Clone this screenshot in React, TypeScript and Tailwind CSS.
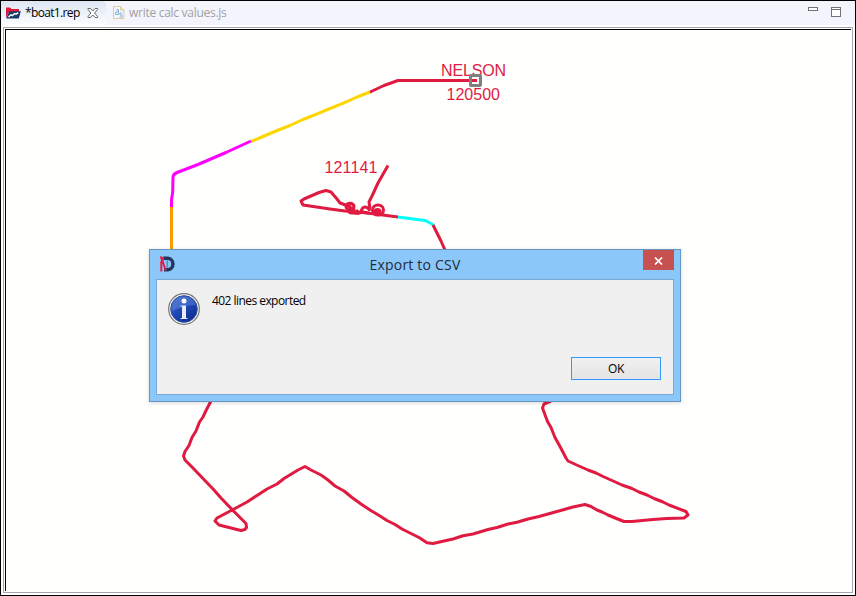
import React from "react";

const RED = "#e01b41";

function ReportIcon() {
  return (
    <svg width="16" height="14" viewBox="0 0 16 14" className="shrink-0">
      <path d="M1 1.5h4l1.5 1.5H14v3H4L1 12z" fill="#e0183c" />
      <path d="M4.200 5.300H15.800L13.800 12.500H1.200z" fill="#1c3a68" />
      <path d="M3.500 11l2.500-2.200 1.500 .8 2-2 1.500 .6 2.200-1.500" fill="none" stroke="#fff" strokeWidth="1.400" />
    </svg>
  );
}

function ScriptIcon() {
  return (
    <svg width="12" height="14" viewBox="0 0 12 14" className="shrink-0">
      <path d="M.5 .5H7.500L10.800 3.800V12.500H.5z" fill="#f5f8fc" stroke="#dccb9c" />
      <path d="M7.500 .5V4H10.800" fill="#f3e5be" stroke="#dccb9c" />
      <path d="M4 3.500H5.500V8.500H2.500V6.500H4zM9.300 7H7V9H9V11H6.500" fill="none" stroke="#8db3da" />
    </svg>
  );
}

function CloseTabIcon() {
  return (
    <svg width="12" height="12" viewBox="0 0 12 12" className="shrink-0">
      <path d="M1 1.500H3.500L5.800 4L8.100 1.500H10.600V2.500L7.600 6L10.600 9.500V10.500H8.100L5.800 8L3.500 10.500H1V9.500L4 6L1 2.500z" fill="#fff" stroke="#65656a" strokeWidth="1" />
    </svg>
  );
}

function TabBar() {
  return (
    <header className="flex h-6 shrink-0 bg-[#f4f5fc] text-[12px] leading-[24px]">
      <div className="flex w-[105px] items-center rounded-tr bg-gradient-to-b from-[#dce6f2] to-[#fcfdff] pl-1">
        <ReportIcon />
        <span className="ml-[4px] w-[56px] whitespace-nowrap tracking-[-0.65px] text-black">*boat1.rep</span>
        <span className="ml-[6px]"><CloseTabIcon /></span>
      </div>
      <div className="flex flex-1 items-center pl-[7px]">
        <ScriptIcon />
        <span className="ml-[4px] whitespace-nowrap tracking-[-0.28px] text-[#a0a0a3]">write calc values.js</span>
      </div>
      <svg width="48" height="24" viewBox="0 0 48 24" fill="#fff" stroke="#727276" shapeRendering="crispEdges">
        <path d="M1.500 6.500h9v3h-9zM24.500 6.500h9v9h-9zM24.500 8.500h9" />
      </svg>
    </header>
  );
}

function TrackPlot() {
  return (
    <svg width="846" height="562" viewBox="6 30 846 562" className="block" fill="none" stroke={RED} strokeWidth="3" strokeLinejoin="round">
      <path d="M475 80.500H398L384 85.500L369 92.500" />
      <path d="M370 92L357 97L344 102.800L330 108.500L316 114.300L303 119.500L290 125.500L276 131L263 136.500L251 141.500" stroke="#ffd500" />
      <path d="M251 141L239 146.500L226 152.500L212 158.500L198 164.500L185 169.500L177 172.500Q173.500 174 173 177L172.700 192L171.500 200V207" stroke="#ff00ff" />
      <path d="M171.500 207V250" stroke="#ff9900" />

      <path d="M388 165.500L378 183L372 196L369 202L370 209" />
      <path d="M398 217L375 214L358 212L345 211L330 209L303 205L301 201L304 199L319 192.500L326 190.500L331 192L337 199L340 203L347 205.500L351 207" />
      <ellipse cx="350" cy="206.500" rx="4" ry="3.200" />
      <circle cx="351.500" cy="210.500" r="2.500" fill={RED} />
      <path d="M353 213l6 .5M361 212q1-5 4-5q3 0 5 4M356 210l3 3 4-1 5 1" />
      <ellipse cx="378" cy="210" rx="5.500" ry="5" />
      <circle cx="377.500" cy="212" r="2.600" fill={RED} />
      <path d="M398 217L425 220.500L432 224L434 226" stroke="#00ffff" />
      <path d="M433 225L437 233L441 241L445 250" />

      <path d="M211 401L206 410.500L203 417L199.500 422L196 431L192 437.500L189 445.500L185 451.500L183.500 456L185 460L192 467L202 477.500L214 490L221 498L234 511.500L246 523.500L246.500 527.500L245 529.500L241 530.500L229 527.500L219 525L215 521L217 518L235 508.500L247 502L257 495.500L267 489L277 484L284 478.500L298 470L305 466.500L311 470L321 475L328 480L335 486L344 491L352 497.500L361 504L370 510L380 516L387 520.500L395 524.500L402 529L410 533L419 537.500L427 542.800L433 543.500L444 541L453 539L463 535.800L473 534L488 529.500L497 527.500L508 524L517 522.300L528 519L539 516.500L548 514L557 511.500L573 507L585 504.500L591 506.500L597 510L602 512L608 515L614 517.500L624 521.500H632L653 519.500L667 518.500L684 518L688 515L686 511.500L669 505L663 502L654 498.500L647 495L639 492L632 488.500L622 485L612 480.500L603 476.500L596 473L588 470L580 466.500L568 461L566 458L560 446.500L555 437.500L551 427.500L547.500 421.500L542.500 408L544 404L551 401" />

      <g className="font-['Liberation_Sans',Arial,sans-serif]" fill={RED} stroke="none" fontSize="16">
        <text x="441" y="76" textLength="65">NELSON</text>
        <text x="446.500" y="100" textLength="53.500">120500</text>
        <text x="324.500" y="173" textLength="53">121141</text>
      </g>
      <rect x="470.500" y="75.500" width="10" height="10" rx=".5" fill="#fffffd" stroke="#808080" />
      <path d="M472 80.500h5" />
    </svg>
  );
}

function AppIcon() {
  return (
    <svg width="18" height="18" viewBox="0 0 18 18" className="shrink-0">
      <path d="M5 1.500H9.500A7.200 7.500 0 0 1 9.500 16.500H6V13H9.500A3.700 4 0 0 0 9.500 5H6z" fill="#203860" />
      <path d="M9.300 5.500V12.500" stroke="#6085b4" strokeWidth="1.500" />
      <path d="M3.300 16.500V6M3 2L7.800 15.500" fill="none" stroke="#df2148" strokeWidth="2" />
      <path d="M2 1L6 2.500L5.500 8L3 5z" fill="#df2148" />
    </svg>
  );
}

function InfoIcon() {
  return (
    <svg width="34" height="34" viewBox="0 0 34 34" className="shrink-0">
      <defs>
        <linearGradient id="infoFill" x1="0" y1="0" x2=".8" y2="1">
          <stop offset="0" stopColor="#5277d4" />
          <stop offset=".5" stopColor="#2049b5" />
          <stop offset="1" stopColor="#0b2c91" />
        </linearGradient>
      </defs>
      <circle cx="17" cy="17" r="15.300" fill="#f7f7f7" stroke="#737373" strokeWidth="1.200" />
      <circle cx="17" cy="17" r="13.300" fill="url(#infoFill)" stroke="#2c4a9d" />
      <path d="M4.500 16A12.600 12.600 0 0 1 29 13Q18 13 4.500 19z" fill="#6c91e6" opacity=".4" />
      <circle cx="17" cy="9" r="2.500" fill="#fff" />
      <path d="M13.500 13.500H19V26H20.500V27H13.500V26H15V14.500H13.500z" fill="#e8ebf4" />
    </svg>
  );
}

function ExportDialog() {
  return (
    <section className="absolute left-[148px] top-[248px] flex h-[153px] w-[532px] flex-col border border-[#6597c2] bg-[#8cc7fa] px-[6px] pb-[6px] shadow-[0_1px_4px_rgba(0,0,0,0.16)]">
      <div className="flex h-[29px] shrink-0">
        <div className="w-[31px] pl-[2px] pt-[5px]"><AppIcon /></div>
        <h1 className="flex-1 pt-[2px] text-center text-[14px] leading-[25px] tracking-[0.2px] text-[#202d39]">Export to CSV</h1>
        <button className="flex h-5 w-[31px] items-center justify-center bg-[#c75050]" aria-label="Close">
          <svg width="9" height="8" viewBox="0 0 9 8" className="mt-px"><path d="M1 .5L8 7.500M8 .5L1 7.500" stroke="#fff" strokeWidth="1.700" /></svg>
        </button>
      </div>
      <div className="flex flex-1 flex-col justify-between border border-[#77a8d3] bg-[#f0f0f0]">
        <div className="flex pl-[10px] pt-3">
          <InfoIcon />
          <p className="ml-[11px] text-[12px] leading-[18px] tracking-[-0.55px] text-black">402 lines exported</p>
        </div>
        <button className="mb-[14px] mr-3 h-[23px] w-[90px] self-end border border-[#3399ff] bg-gradient-to-b from-[#f0f0f0] to-[#e4e4e4] text-[12px] leading-[21px] tracking-[-0.4px] text-black">OK</button>
      </div>
    </section>
  );
}

export default function App() {
  return (
    <div className="relative flex h-[596px] w-[856px] flex-col overflow-hidden border border-black bg-white font-['Open_Sans','Noto_Sans',sans-serif]">
      <TabBar />
      <main className="ml-[2px] mr-[2px] mt-[2px] h-[566px] shrink-0 border border-[#a5a5b0] bg-[#fffffd] pl-px pt-px">
        <div className="h-[562px] w-[846px] overflow-hidden border-l border-t border-black"><TrackPlot /></div>
      </main>
      <ExportDialog />
    </div>
  );
}
